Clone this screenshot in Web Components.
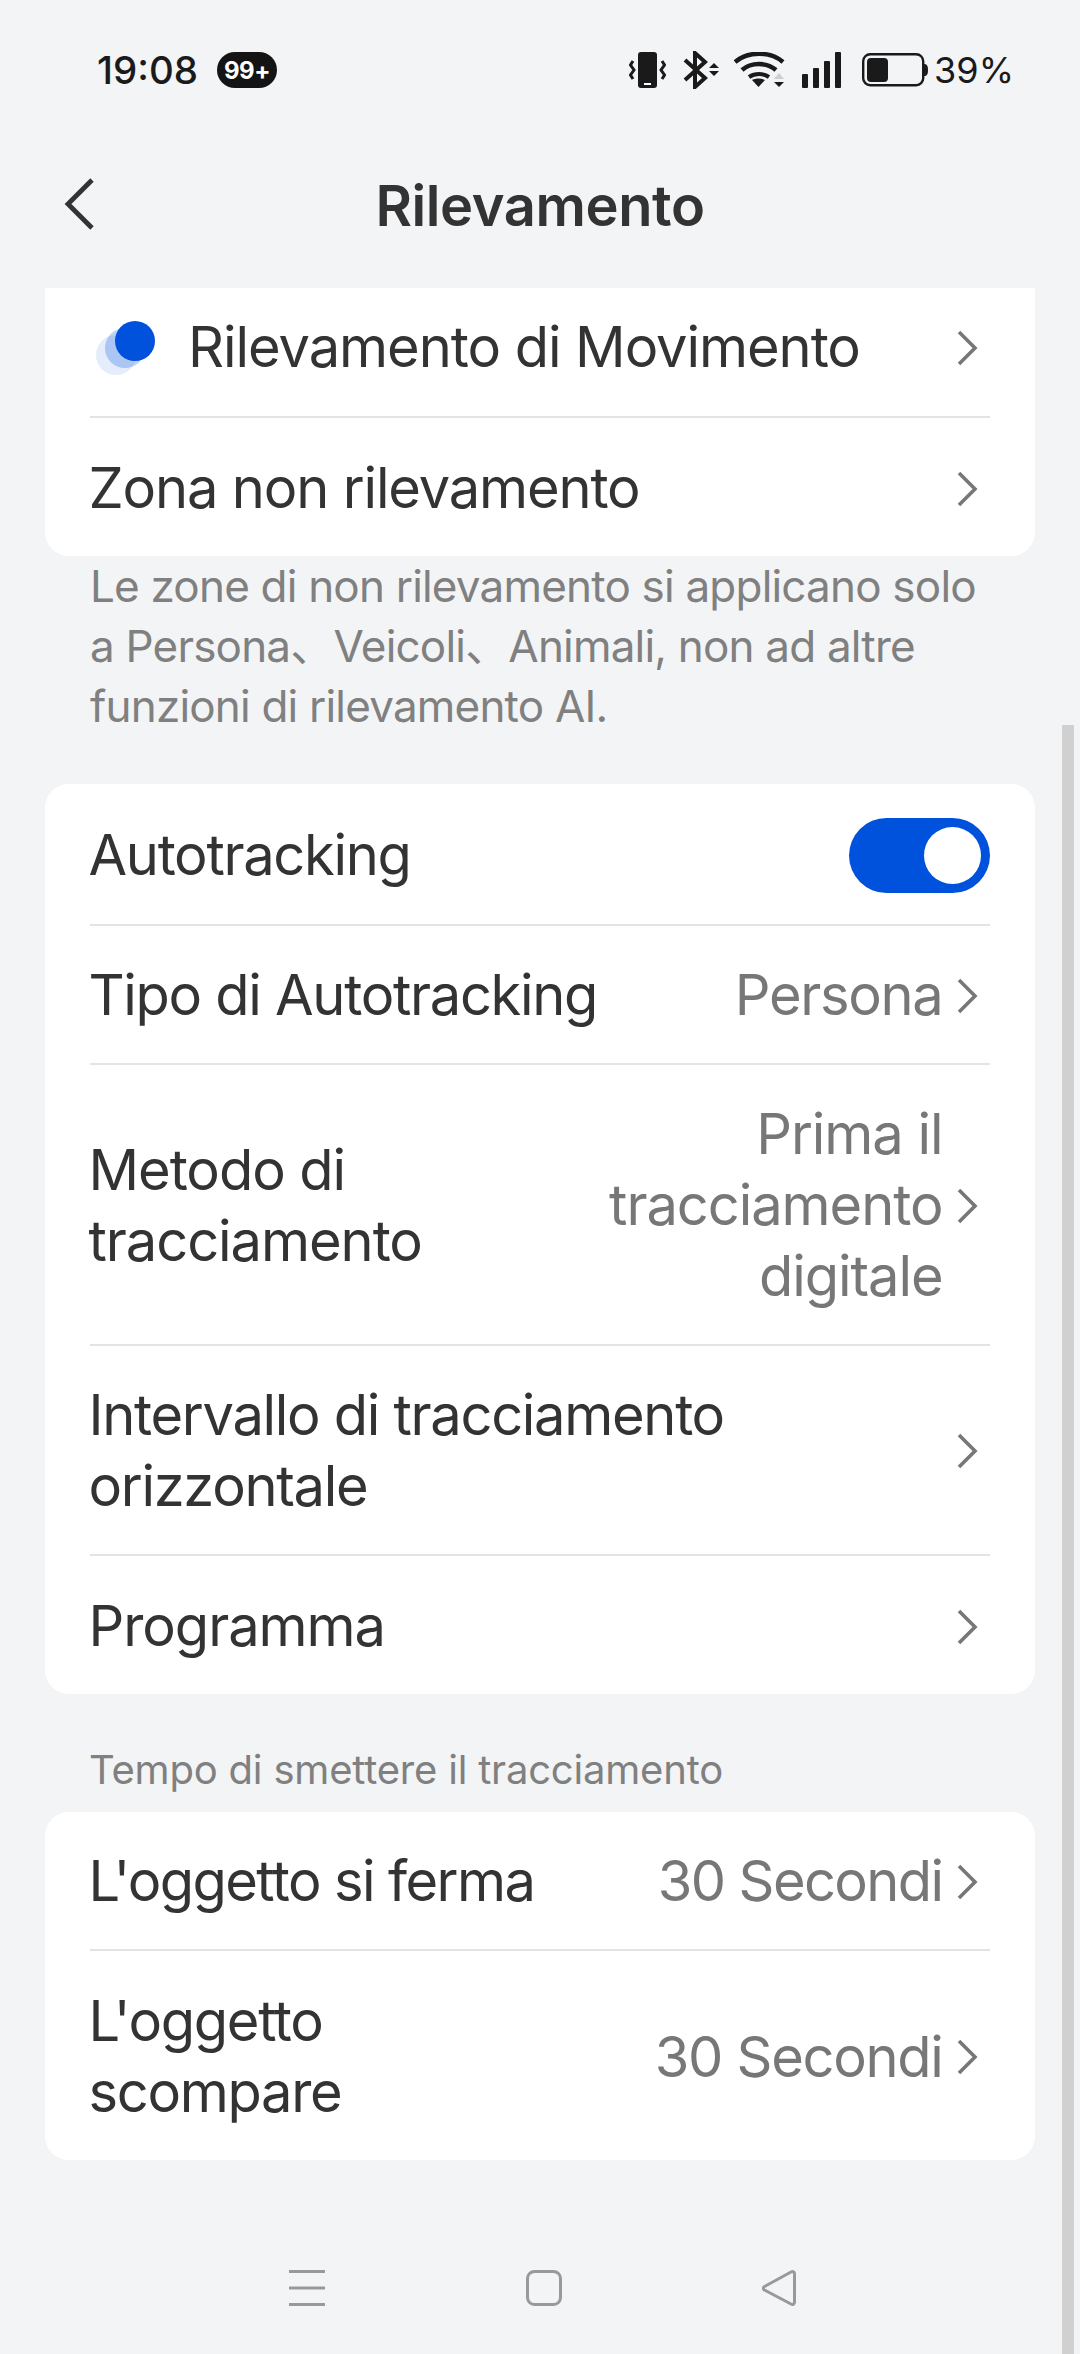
<!DOCTYPE html>
<html lang="it">
<head>
<meta charset="utf-8">
<title>Rilevamento</title>
<style>
  html, body { margin: 0; height: 100%; }
  body { background: #f3f4f6; font-family: Inter, "Noto Sans CJK SC", sans-serif; overflow: hidden; }
</style>
</head>
<body>
<detect-screen>
  <status-bar slot="status"></status-bar>
  <page-header slot="header" title="Rilevamento"></page-header>

  <settings-card class="clipped">
    <setting-row height="130" pad="24px 0 33px" style="letter-spacing:-1.05px" link>
      <motion-dot slot="lead"></motion-dot>
      Rilevamento di Movimento
    </setting-row>
    <setting-row link last style="letter-spacing:-1.15px">Zona non rilevamento</setting-row>
  </settings-card>
  <card-note>Le zone di non rilevamento si applicano solo a Persona、Veicoli、Animali, non ad altre funzioni di rilevamento AI.</card-note>

  <settings-card style="margin-top:48px">
    <setting-row height="142">
      Autotracking
      <toggle-switch slot="trail"></toggle-switch>
    </setting-row>
    <setting-row link value="Persona">Tipo di Autotracking</setting-row>
    <setting-row link value="Prima il tracciamento digitale" value-width="340" style="letter-spacing:-1.05px">Metodo di<br>tracciamento</setting-row>
    <setting-row link>Intervallo di tracciamento<br>orizzontale</setting-row>
    <setting-row link last style="letter-spacing:-1.05px">Programma</setting-row>
  </settings-card>

  <section-label>Tempo di smettere il tracciamento</section-label>

  <settings-card>
    <setting-row link value="30 Secondi" style="letter-spacing:-1.6px">L'oggetto si ferma</setting-row>
    <setting-row link last value="30 Secondi">L'oggetto<br>scompare</setting-row>
  </settings-card>

  <nav-buttons slot="nav"></nav-buttons>
</detect-screen>

<script>
function tpl(html) {
  const t = document.createElement('template');
  t.innerHTML = html;
  return t;
}

function mount(el, t) {
  el.attachShadow({ mode: 'open' }).appendChild(t.content.cloneNode(true));
}

const screenTpl = tpl(`
  <style>
    :host { display: flex; flex-direction: column; height: 2354px; position: relative; overflow: hidden; }
    .body { height: 1982px; flex: none; padding: 0 45px; display: flex; flex-direction: column; overflow: hidden; }
    .scrollbar { position: absolute; left: 1062px; top: 725px; width: 12px; height: 1629px; background: #d0d0d0; }
  </style>
  <slot name="status"></slot>
  <slot name="header"></slot>
  <div class="body"><slot></slot></div>
  <slot name="nav"></slot>
  <div class="scrollbar"></div>
`);
customElements.define('detect-screen', class extends HTMLElement {
  constructor() { super(); mount(this, screenTpl); }
});

const statusTpl = tpl(`
  <style>
    :host { display: flex; align-items: center; height: 140px; padding: 0 66px 0 97px; box-sizing: border-box; color: #1a1a1a; }
    .time { font-size: 38.500px; font-weight: 500; }
    .badge { margin-left: 19px; width: 60px; height: 36px; border-radius: 18px; background: #141414; color: #fff; font-size: 24px; font-weight: 700; letter-spacing: -0.5px; display: flex; align-items: center; justify-content: center; }
    .icons { margin-left: auto; display: flex; align-items: center; }
    svg { display: block; flex: none; }
    .pct { font-size: 36px; font-weight: 400; margin-left: 6px; }
  </style>
  <span class="time">19:08</span>
  <span class="badge">99+</span>
  <div class="icons">
    <svg width="37" height="37" viewBox="0 0 37 37" fill="none">
      <rect x="9" y="0" width="19" height="36" rx="3" fill="#1a1a1a"/>
      <rect x="15" y="31" width="7" height="2" fill="#fff"/>
      <path d="M4 9 1.500 13l3.500 5-3.500 5L4 27M33 9l2.500 4-3.500 5 3.500 5-2.500 4" stroke="#1a1a1a" stroke-width="3"/>
    </svg>
    <svg style="margin-left:17px" width="36" height="38" viewBox="0 0 36 38" fill="none">
      <path d="M2 9 22 27 12 36V2l10 9L2 29" stroke="#1a1a1a" stroke-width="4"/>
      <path d="M26 17 31 12l5 5zM26 20l5 5 5-5z" fill="#1a1a1a"/>
    </svg>
    <svg style="margin-left:15px" width="52" height="37" viewBox="0 0 52 37" fill="none">
      <path d="M1 10C14-1 36-1 49 10" stroke="#1a1a1a" stroke-width="4.500"/>
      <path d="M8 18c9-8 25-8 34 0" stroke="#1a1a1a" stroke-width="4.500"/>
      <path d="M15 25c6-4 14-4 20 0" stroke="#1a1a1a" stroke-width="4"/>
      <path d="M18 28c4-2 9-2 13 0l-6.500 7z" fill="#1a1a1a"/>
      <path d="M40 27l5-6 5 6z" fill="#cfcfcf"/>
      <path d="M40 30l5 5 5-5z" fill="#1a1a1a"/>
    </svg>
    <svg style="margin-left:16px" width="39" height="36" viewBox="0 0 39 36">
      <rect x="0" y="22" width="6" height="14" rx="1" fill="#1a1a1a"/>
      <rect x="11" y="16" width="6" height="20" rx="1" fill="#1a1a1a"/>
      <rect x="22" y="9" width="6" height="27" rx="1" fill="#1a1a1a"/>
      <rect x="33" y="0" width="6" height="36" rx="1" fill="#1a1a1a"/>
    </svg>
    <svg style="margin-left:21px" width="66" height="34" viewBox="0 0 66 34" fill="none">
      <rect x="1.200" y="1.200" width="60" height="31" rx="7" stroke="#1a1a1a" stroke-width="2.400"/>
      <rect x="5" y="5" width="21" height="24" rx="4" fill="#1a1a1a"/>
      <path d="M62 11c3 0 4 2 4 6s-1 6-4 6z" fill="#1a1a1a"/>
    </svg>
    <span class="pct">39%</span>
  </div>
`);
customElements.define('status-bar', class extends HTMLElement {
  constructor() { super(); mount(this, statusTpl); }
});

const headerTpl = tpl(`
  <style>
    :host { display: flex; align-items: center; justify-content: center; height: 148px; padding-bottom: 16px; box-sizing: border-box; position: relative; color: #333; }
    h1 { margin: 0; font-size: 56px; font-weight: 600; letter-spacing: -0.4px; }
    svg { position: absolute; left: 63px; top: 37px; }
  </style>
  <svg width="34" height="54" viewBox="0 0 34 54" fill="none"><path d="M29 3 5 27l24 24" stroke="#333" stroke-width="4.800"/></svg>
  <h1></h1>
`);
customElements.define('page-header', class extends HTMLElement {
  constructor() {
    super();
    mount(this, headerTpl);
    this.shadowRoot.querySelector('h1').textContent = this.getAttribute('title');
  }
});

const cardTpl = tpl(`
  <style>
    :host { display: block; flex: none; background: #fff; border-radius: 24px; padding: 0 45px; }
    :host(.clipped) { border-radius: 0 0 24px 24px; }
  </style>
  <slot></slot>
`);
customElements.define('settings-card', class extends HTMLElement {
  constructor() { super(); mount(this, cardTpl); }
});

const rowTpl = tpl(`
  <style>
    :host { display: flex; align-items: center; box-sizing: border-box; padding: 34px 0 32px; border-bottom: 2px solid #e4e4e6; font-size: 56px; line-height: 71px; color: #333; letter-spacing: -1.3px; }
    :host([last]) { border-bottom: none; padding: 35px 0 32px; }
    .label { flex: 1; min-width: 0; margin-left: -1.5px; }
    .lead { display: flex; }
    .value { color: #777; text-align: right; }
    svg { flex: none; margin-left: 13.500px; margin-right: 12px; }
  </style>
  <div class="lead"><slot name="lead"></slot></div>
  <div class="label"><slot></slot></div>
  <div class="value"></div>
  <slot name="trail"></slot>
`);
const chevron = `<svg width="22" height="36" viewBox="0 0 22 36" fill="none"><path d="M3 2l16 16L3 34" stroke="#777" stroke-width="3.600"/></svg>`;
customElements.define('setting-row', class extends HTMLElement {
  constructor() {
    super();
    mount(this, rowTpl);
    const root = this.shadowRoot;
    const value = root.querySelector('.value');
    if (this.hasAttribute('value')) value.textContent = this.getAttribute('value');
    if (this.hasAttribute('value-width')) value.style.width = this.getAttribute('value-width') + 'px';
    if (this.hasAttribute('height')) this.style.height = this.getAttribute('height') + 'px';
    if (this.hasAttribute('pad')) this.style.padding = this.getAttribute('pad');
    if (this.hasAttribute('link')) root.appendChild(tpl(chevron).content.cloneNode(true));
  }
});

const dotTpl = tpl(`
  <style>
    :host { display: block; width: 93.500px; height: 62px; position: relative; margin-left: 6px; }
    i { position: absolute; width: 40px; height: 40px; border-radius: 50%; background: #0052dd; }
    .a { left: 0; top: 18px; opacity: .1; }
    .b { left: 9px; top: 11px; opacity: .25; }
    .c { left: 19px; top: 4px; opacity: 1; }
  </style>
  <i class="a"></i><i class="b"></i><i class="c"></i>
`);
customElements.define('motion-dot', class extends HTMLElement {
  constructor() { super(); mount(this, dotTpl); }
});

const toggleTpl = tpl(`
  <style>
    :host { display: block; flex: none; width: 141px; height: 75px; border-radius: 38px; background: #0052dd; position: relative; }
    i { position: absolute; right: 9px; top: 9px; width: 57px; height: 57px; border-radius: 50%; background: #fff; }
  </style>
  <i></i>
`);
customElements.define('toggle-switch', class extends HTMLElement {
  constructor() { super(); mount(this, toggleTpl); }
});

const noteTpl = tpl(`
  <style>
    :host { display: block; flex: none; padding: 0 45px; font-size: 44px; line-height: 60px; color: #808080; letter-spacing: -0.8px; }
  </style>
  <slot></slot>
`);
customElements.define('card-note', class extends HTMLElement {
  constructor() { super(); mount(this, noteTpl); }
});

const labelTpl = tpl(`
  <style>
    :host { display: block; flex: none; padding: 51px 45px 0 44px; height: 118px; box-sizing: border-box; font-size: 40px; line-height: 50px; color: #808080; letter-spacing: -0.2px; }
  </style>
  <slot></slot>
`);
customElements.define('section-label', class extends HTMLElement {
  constructor() { super(); mount(this, labelTpl); }
});

const navTpl = tpl(`
  <style>
    :host { display: flex; align-items: flex-start; height: 84px; padding-left: 289px; box-sizing: border-box; gap: 201px; }
    svg { display: block; flex: none; }
  </style>
  <svg width="36" height="37" viewBox="0 0 36 37"><path d="M0 1.500h36M0 18h36M0 34.500h36" stroke="#999" stroke-width="3"/></svg>
  <svg width="36" height="36" viewBox="0 0 36 36" fill="none"><rect x="1.500" y="1.500" width="33" height="33" rx="7" stroke="#999" stroke-width="3"/></svg>
  <svg style="margin-left:-1px" width="34" height="36" viewBox="0 0 34 36" fill="none"><path d="M2.500 16.500 29 2c2-1 3.500 0 3.500 2v28c0 2-1.500 3-3.500 2L2.500 20c-1.500-1-1.500-2.500 0-3.500z" stroke="#999" stroke-width="3"/></svg>
`);
customElements.define('nav-buttons', class extends HTMLElement {
  constructor() { super(); mount(this, navTpl); }
});
</script>
</body>
</html>
